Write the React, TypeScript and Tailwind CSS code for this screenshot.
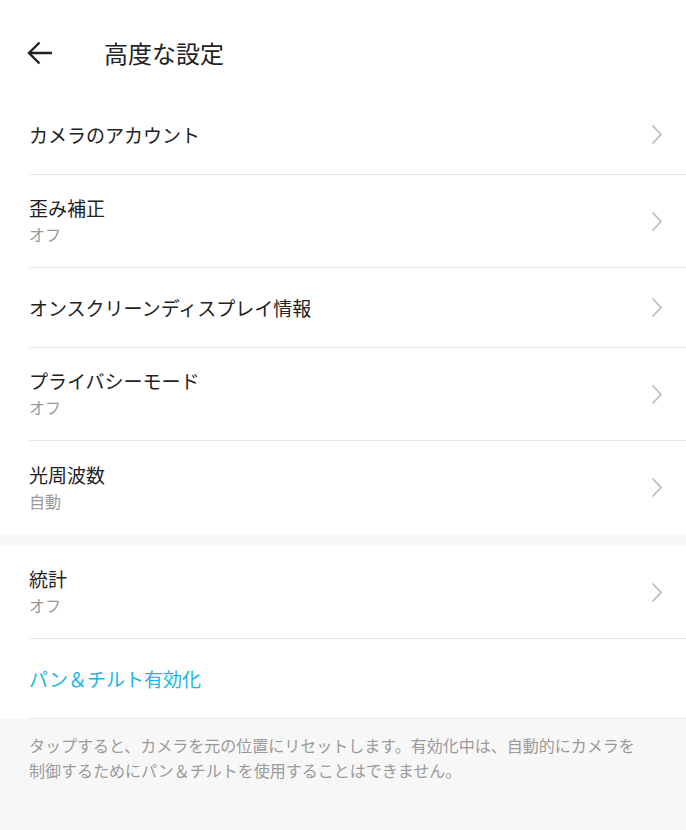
const font = { fontFamily: '"Noto Sans CJK JP", "Noto Sans", sans-serif' }

type Item = { title: string; sub?: string }

const firstGroup: Item[] = [
  { title: 'カメラのアカウント' },
  { title: '歪み補正', sub: 'オフ' },
  { title: 'オンスクリーンディスプレイ情報' },
  { title: 'プライバシーモード', sub: 'オフ' },
  { title: '光周波数', sub: '自動' },
]

const Chevron = () => (
  <svg width="12" height="21" viewBox="0 0 12 21" fill="none">
    <path d="M1.5 1.5 L10 10.5 L1.5 19.5" stroke="#bdbdbd" strokeWidth="1.8" />
  </svg>
)

const Row = ({ item, last }: { item: Item; last?: boolean }) => (
  <div
    className={`ml-[29px] pr-[23px] flex items-center justify-between ${
      item.sub ? 'h-[93px]' : 'h-[80px]'
    } ${last ? '' : 'border-b border-[#e8e8e8]'}`}
  >
    <div className="flex flex-col">
      <span className="text-[19px] leading-[26px] text-[#222]">{item.title}</span>
      {item.sub && <span className="text-[16px] leading-[26px] text-[#999]">{item.sub}</span>}
    </div>
    <Chevron />
  </div>
)

export default function App() {
  return (
    <div style={font} className="w-full min-h-[830px] bg-[#f7f7f7]">
      <div className="bg-white">
        <div className="h-[95px] pt-[11px] flex items-center">
          <div className="ml-[27px] w-[26px] flex">
            <svg width="26" height="24" viewBox="0 0 26 24" fill="none">
              <path d="M25 12 H2.5 M12.5 1.5 L2 12 L12.5 22.5" stroke="#222" strokeWidth="2.4" />
            </svg>
          </div>
          <span className="ml-[51px] text-[24px] leading-[32px] text-[#222]">高度な設定</span>
        </div>
        {firstGroup.map((item, i) => (
          <Row key={item.title} item={item} last={i === firstGroup.length - 1} />
        ))}
      </div>
      <div className="h-[12px]" />
      <div className="bg-white">
        <Row item={{ title: '統計', sub: 'オフ' }} />
        <div className="ml-[29px] h-[80px] flex items-center border-b border-[#e8e8e8]">
          <span className="text-[19px] leading-[26px] text-[#22b4e6]">パン＆チルト有効化</span>
        </div>
      </div>
      <div className="px-[29px] pt-[14px] text-[16px] leading-[25px] text-[#9a9a9a]">
        タップすると、カメラを元の位置にリセットします。有効化中は、自動的にカメラを
        <br />
        制御するためにパン＆チルトを使用することはできません。
      </div>
    </div>
  )
}
